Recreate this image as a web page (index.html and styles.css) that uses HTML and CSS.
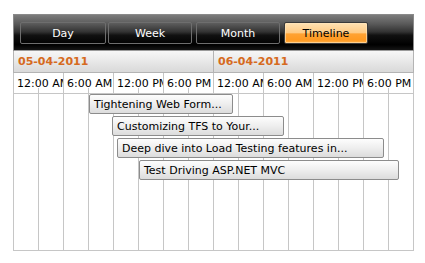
FILE: index.html
```html
<!DOCTYPE html>
<html>
<head>
<meta charset="utf-8">
<link rel="stylesheet" href="styles.css">
</head>
<body>
<div class="scheduler">
  <div class="toolbar">
    <span class="view-btn day">Day</span>
    <span class="view-btn">Week</span>
    <span class="view-btn">Month</span>
    <span class="view-btn active">Timeline</span>
  </div>
  <div class="date-row">
    <div class="date-cell">05-04-2011</div>
    <div class="date-cell">06-04-2011</div>
  </div>
  <div class="time-row">
    <div class="time-cell">12:00 AM</div>
    <div class="time-cell">6:00 AM</div>
    <div class="time-cell">12:00 PM</div>
    <div class="time-cell">6:00 PM</div>
    <div class="time-cell">12:00 AM</div>
    <div class="time-cell">6:00 AM</div>
    <div class="time-cell">12:00 PM</div>
    <div class="time-cell">6:00 PM</div>
  </div>
  <div class="grid-body">
    <div class="col"></div><div class="col"></div><div class="col"></div><div class="col"></div>
    <div class="col"></div><div class="col"></div><div class="col"></div><div class="col"></div>
    <div class="col"></div><div class="col"></div><div class="col"></div><div class="col"></div>
    <div class="col"></div><div class="col"></div><div class="col"></div><div class="col"></div>
    <div class="appt a1">Tightening Web Form...</div>
    <div class="appt a2">Customizing TFS to Your...</div>
    <div class="appt a3">Deep dive into Load Testing features in...</div>
    <div class="appt a4">Test Driving ASP.NET MVC</div>
  </div>
</div>
</body>
</html>
```
FILE: styles.css
```css
html, body {
  margin: 0;
  padding: 0;
  background: #ffffff;
}
body {
  font-family: "DejaVu Sans", Verdana, sans-serif;
  font-size: 11px;
}
.scheduler {
  margin: 14px 0 0 13px;
  width: 401px;
}
.toolbar {
  box-sizing: border-box;
  height: 37px;
  border: 1px solid #8a8a8a;
  border-bottom-color: #9a9a9a;
  background: linear-gradient(#7c7c7c 0%, #5a5a5a 25%, #333333 48%, #111111 58%, #000000 85%, #151515 100%);
  display: flex;
  align-items: flex-start;
  padding: 7px 0 0 6px;
  gap: 4px;
}
.view-btn {
  box-sizing: border-box;
  width: 84px;
  height: 22px;
  border: 1px solid #6e6e6e;
  border-radius: 2px;
  color: #ffffff;
  display: flex;
  align-items: center;
  justify-content: center;
  line-height: 1;
}
.view-btn.day {
  width: 86px;
  margin-right: -2px;
}
.view-btn.active {
  border-color: #3a3a3a;
  color: #000000;
  background: linear-gradient(#ffe2b3 0%, #ffcb85 48%, #ffa233 55%, #ff9a22 85%, #ffb04a 100%);
  box-shadow: inset 0 0 0 1px rgba(255, 230, 190, 0.6);
}
.date-row {
  display: flex;
  height: 22px;
  box-sizing: border-box;
  border-bottom: 1px solid #b4b4b4;
  border-right: 1px solid #b4b4b4;
  background: linear-gradient(#f7f7f7, #d9d9d9);
}
.date-cell {
  box-sizing: border-box;
  width: 200px;
  border-left: 1px solid #b4b4b4;
  padding-left: 4px;
  color: #d66a20;
  font-weight: bold;
  display: flex;
  align-items: center;
}
.time-row {
  display: flex;
  height: 20px;
  box-sizing: border-box;
  border-right: 1px solid #c6c6c6;
}
.time-cell {
  position: relative;
  box-sizing: border-box;
  width: 50px;
  border-left: 1px solid #c6c6c6;
  padding-left: 3px;
  white-space: nowrap;
  overflow: hidden;
  color: #000000;
  display: flex;
  align-items: center;
}
.time-cell::after {
  content: "";
  position: absolute;
  left: 24px;
  bottom: 0;
  width: 1px;
  height: 5px;
  background: #c6c6c6;
}
.grid-body {
  position: relative;
  display: flex;
  height: 158px;
  box-sizing: border-box;
  border-top: 1px solid #c6c6c6;
  border-right: 1px solid #c6c6c6;
  border-bottom: 1px solid #c6c6c6;
}
.col {
  box-sizing: border-box;
  width: 25px;
  border-left: 1px solid #c6c6c6;
}
.appt {
  position: absolute;
  box-sizing: border-box;
  height: 20px;
  border: 1px solid #8c8c8c;
  border-radius: 2px;
  background: linear-gradient(#fdfdfd 0%, #eeeeee 50%, #dcdcdc 100%);
  color: #000000;
  padding-left: 4px;
  white-space: nowrap;
  overflow: hidden;
  display: flex;
  align-items: center;
}
.a1 { left: 76px; top: 0; width: 144px; }
.a2 { left: 99px; top: 22px; width: 172px; }
.a3 { left: 104px; top: 44px; width: 267px; }
.a4 { left: 126px; top: 66px; width: 260px; }
```
